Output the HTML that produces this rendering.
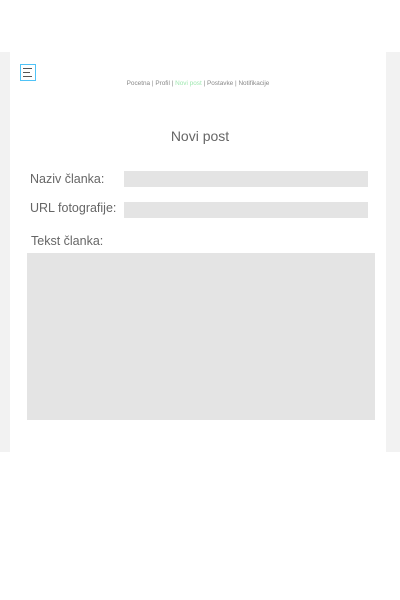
<!DOCTYPE html>
<html><head><style>
body{margin:0;width:400px;height:600px;background:#fff;position:relative;font-family:"Liberation Sans",sans-serif;overflow:hidden}
.bg{position:absolute;left:0;top:52px;width:400px;height:400px;background:#f2f2f2}
.main{position:absolute;left:10px;top:52px;width:376px;height:400px;background:#fff}
.logo{position:absolute;left:20px;top:64px;width:14px;height:15px;border:1px solid #4fc3f7;background:#fff}
.logo i{position:absolute;left:2px;height:1px;width:9px;background:#555}
.nav{position:absolute;left:0;width:396px;top:80px;text-align:center;font-size:6.4px;color:#888;white-space:pre}
.t{position:absolute;color:#666;font-size:12.5px}
.in{position:absolute;background:#e4e4e4}
</style></head><body>
<div class="bg"></div><div class="main"></div>
<div class="logo"><i style="top:3px"></i><i style="top:7px;width:7px"></i><i style="top:11px"></i></div>
<div class="nav">Pocetna | Profil | <span style="color:#9fe8b0">Novi post</span> | Postavke | Notifikacije</div>
<div class="t" style="left:0;width:400px;text-align:center;top:128px;font-size:14px">Novi post</div>
<div class="t" style="left:30px;top:172px">Naziv članka:</div>
<div class="in" style="left:124px;top:171px;width:244px;height:16px"></div>
<div class="t" style="left:30px;top:201px">URL fotografije:</div>
<div class="in" style="left:124px;top:202px;width:244px;height:16px"></div>
<div class="t" style="left:31px;top:234px">Tekst članka:</div>
<div class="in" style="left:27px;top:253px;width:348px;height:167px"></div>
</body></html>
